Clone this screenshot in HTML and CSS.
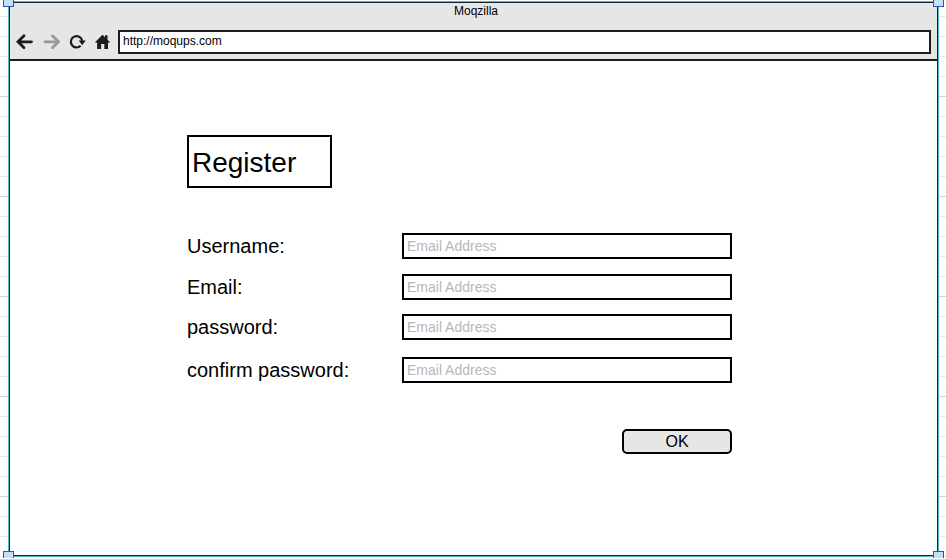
FILE: index.html
```html
<!DOCTYPE html>
<html lang="en">
<head>
<meta charset="utf-8">
<title>Moqzilla</title>
<link rel="stylesheet" href="styles.css">
</head>
<body>
<div class="canvas">
  <div class="browser">
    <header class="chrome">
      <div class="title"><span>Moqzilla</span></div>
      <div class="toolbar">
        <svg class="icons" width="108" height="24" viewBox="0 0 108 24">
          <path d="M21.500 11.800H9M14 5.800L8 11.800l6 6" fill="none" stroke="#1c1c1c" stroke-width="2.800" stroke-linecap="round"/>
          <path d="M35 11.800h13M42.500 5.800l6 6-6 6" fill="none" stroke="#999" stroke-width="2.800" stroke-linecap="round"/>
          <path d="M70.600 15.800a5.700 5.700 0 1 1 1.600-4.800" fill="none" stroke="#1c1c1c" stroke-width="2.200"/>
          <path d="M68.700 10.600h7l-3.500 4.600z" fill="#1c1c1c"/>
          <path d="M84.800 12.500L92.500 4.800l2.500 2.400V5.300h2.500v4.400l2.800 2.800h-2.300V19h-3.700v-5h-3.200v5h-4v-6.500z" fill="#1c1c1c"/>
        </svg>
        <div class="address"><span>http://moqups.com</span></div>
      </div>
    </header>
    <main class="page">
      <h1 class="heading">Register</h1>
      <form class="form">
        <div class="row"><label for="user">Username:</label><input id="user" placeholder="Email Address"></div>
        <div class="row"><label for="email">Email:</label><input id="email" placeholder="Email Address"></div>
        <div class="row"><label for="pass">password:</label><input id="pass" placeholder="Email Address"></div>
        <div class="row confirm"><label for="confirm">confirm password:</label><input id="confirm" placeholder="Email Address"></div>
        <button class="ok" type="button">OK</button>
      </form>
    </main>
  </div>
  <i class="handle top left"></i>
  <i class="handle top right"></i>
  <i class="handle bottom left"></i>
  <i class="handle bottom right"></i>
</div>
</body>
</html>
```
FILE: styles.css
```css
* { box-sizing: border-box; }
body {
  margin: 0;
  background: #fff;
  color: #000;
  font-family: "Liberation Sans", Arial, sans-serif;
}
.canvas {
  position: relative;
  width: 946px;
  height: 559px;
  padding: 1px 7px 2px 8px;
  overflow: hidden;
  background:
    repeating-linear-gradient(transparent 0 96px, #d4d4d4 96px 97px, transparent 97px 100px),
    repeating-linear-gradient(transparent 0 16px, #e9e9e9 16px 17px, transparent 17px 20px),
    #fff;
}
.browser {
  width: 929px;
  height: 554px;
  margin: 1px 0 0 1px;
  border: 1px solid #062a38;
  outline: 1px solid #57b5c6;
  background: #fff;
}
.chrome {
  height: 58px;
  background: #e6e6e6;
  border-bottom: 2px solid #1c1c1c;
}
.title {
  height: 27px;
  padding-left: 5px;
  text-align: center;
  font-size: 12px;
  line-height: 16px;
}
.toolbar { display: flex; }
.icons { display: block; flex: none; }
.address {
  width: 813px;
  height: 24px;
  padding-left: 3px;
  border: 2px solid #1c1c1c;
  background: #fff;
  font-size: 12px;
  line-height: 19px;
}
.page { padding: 74px 0 0 177px; }
.heading {
  width: 145px;
  height: 53px;
  margin: 0 0 45px;
  padding-left: 3px;
  border: 2px solid #000;
  font-size: 28px;
  font-weight: 400;
  line-height: 51px;
}
.form {
  display: flex;
  flex-direction: column;
  width: 545px;
}
.row {
  display: flex;
  justify-content: space-between;
  height: 26px;
  margin-bottom: 15px;
  font-size: 20px;
  line-height: 26px;
}
.row:nth-child(2) { margin-bottom: 14px; }
.row:nth-child(3) { margin-bottom: 17px; }
.row.confirm { margin-bottom: 46px; }
.row input {
  width: 330px;
  height: 26px;
  margin: 0;
  padding: 0 3px;
  border: 2px solid #000;
  background: #fff;
  font: 14px "Liberation Sans", Arial, sans-serif;
}
.row input::placeholder { color: #b8b8b8; }
.ok {
  align-self: flex-end;
  width: 110px;
  height: 25px;
  padding: 0;
  border: 2px solid #000;
  border-radius: 5px;
  background: #e6e6e6;
  color: #000;
  font: 16px/21px "Liberation Sans", Arial, sans-serif;
}
.handle {
  position: absolute;
  width: 11px;
  height: 11px;
  border: 1px solid #3450b4;
  background: #c3e0fa;
}
.top { top: -4px; }
.bottom { top: 551px; height: 7px; border-bottom: 0; }
.left { left: 3px; }
.right { left: 933px; }
```
